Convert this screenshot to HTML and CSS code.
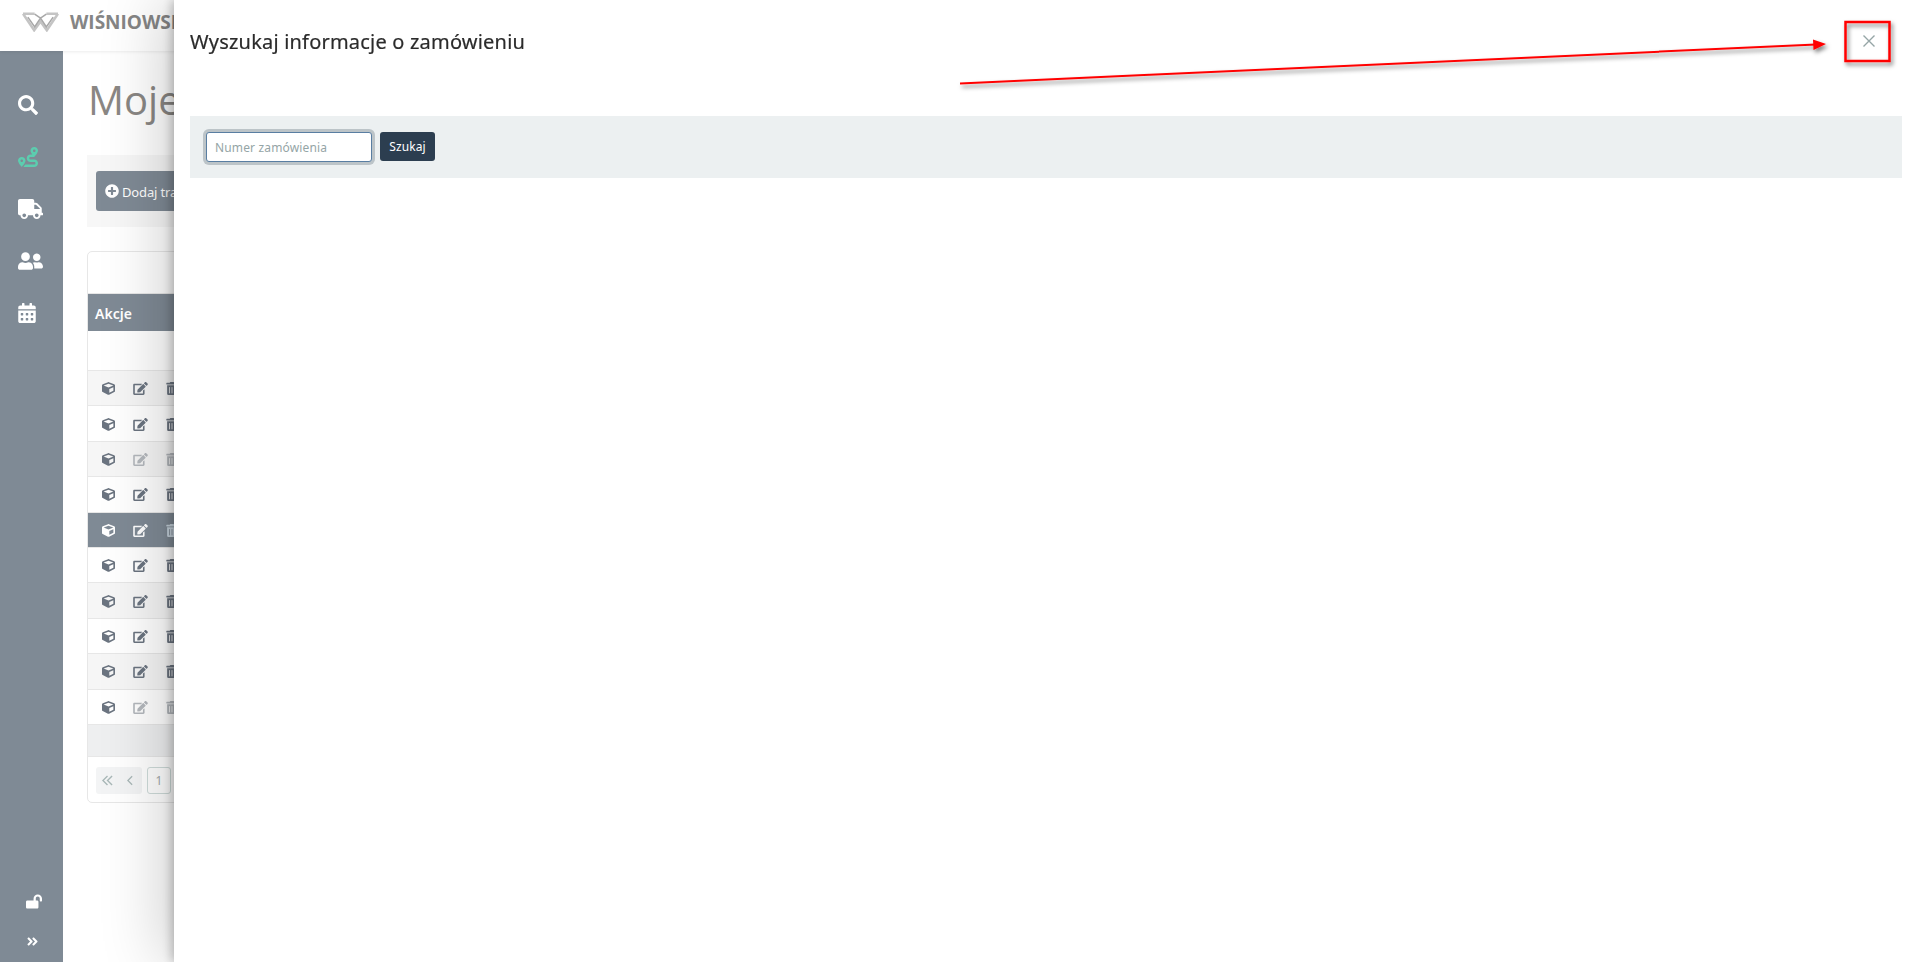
FILE: index.html
```html
<!DOCTYPE html>
<html lang="pl">
<head>
<meta charset="utf-8">
<title>Moje trasy</title>
<link rel="stylesheet" href="styles.css">
</head>
<body>
<svg class="defs" width="0" height="0" aria-hidden="true">
  <symbol id="i-search" viewBox="0 0 512 512"><path d="M505 442.7L405.3 343c-4.5-4.5-10.6-7-17-7H372c27.6-35.3 44-79.7 44-128C416 93.1 322.9 0 208 0S0 93.1 0 208s93.1 208 208 208c48.3 0 92.7-16.4 128-44v16.3c0 6.4 2.5 12.5 7 17l99.7 99.7c9.4 9.4 24.6 9.4 33.9 0l28.3-28.3c9.4-9.4 9.4-24.6.1-34zM208 336c-70.7 0-128-57.2-128-128 0-70.7 57.2-128 128-128 70.7 0 128 57.2 128 128 0 70.7-57.2 128-128 128z"/></symbol>
  <symbol id="i-route" viewBox="0 0 512 512"><path d="M416 320h-96c-17.6 0-32-14.4-32-32s14.4-32 32-32h96s96-107 96-160-43-96-96-96-96 43-96 96c0 25.5 22.2 63.4 45.3 96H320c-52.9 0-96 43.1-96 96s43.1 96 96 96h96c17.6 0 32 14.4 32 32s-14.4 32-32 32H185.5c-16 24.8-33.8 47.7-47.3 64H416c52.9 0 96-43.1 96-96s-43.1-96-96-96zm0-256c17.7 0 32 14.3 32 32s-14.3 32-32 32-32-14.3-32-32 14.3-32 32-32zM96 256c-53 0-96 43-96 96s96 160 96 160 96-107 96-160-43-96-96-96zm0 128c-17.7 0-32-14.3-32-32s14.3-32 32-32 32 14.3 32 32-14.3 32-32 32z"/></symbol>
  <symbol id="i-truck" viewBox="0 0 640 512"><path d="M624 352h-16V243.9c0-12.7-5.1-24.9-14.1-33.9L494 110.1c-9-9-21.2-14.1-33.9-14.1H416V48c0-26.5-21.5-48-48-48H48C21.5 0 0 21.5 0 48v320c0 26.5 21.5 48 48 48h16c0 53 43 96 96 96s96-43 96-96h128c0 53 43 96 96 96s96-43 96-96h48c8.8 0 16-7.2 16-16v-32c0-8.8-7.2-16-16-16zM160 464c-26.5 0-48-21.5-48-48s21.5-48 48-48 48 21.5 48 48-21.5 48-48 48zm320 0c-26.5 0-48-21.5-48-48s21.5-48 48-48 48 21.5 48 48-21.5 48-48 48zm80-208H416V144h44.1l99.9 99.9V256z"/></symbol>
  <symbol id="i-users" viewBox="0 0 640 512"><path d="M192 256c61.9 0 112-50.1 112-112S253.9 32 192 32 80 82.1 80 144s50.1 112 112 112zm76.8 32h-8.3c-20.8 10-43.9 16-68.5 16s-47.6-6-68.5-16h-8.3C51.6 288 0 339.6 0 403.2V432c0 26.5 21.5 48 48 48h288c26.5 0 48-21.5 48-48v-28.8c0-63.6-51.6-115.2-115.2-115.2zM480 256c53 0 96-43 96-96s-43-96-96-96-96 43-96 96 43 96 96 96zm48 32h-3.8c-13.9 4.8-28.6 8-44.2 8s-30.3-3.2-44.2-8H432c-20.4 0-39.2 5.9-55.7 15.4 24.4 26.3 39.7 61.2 39.7 99.8v38.4c0 2.2-.5 4.3-.6 6.4H592c26.5 0 48-21.5 48-48 0-61.9-50.1-112-112-112z"/></symbol>
  <symbol id="i-calendar" viewBox="0 0 448 512"><path d="M0 464c0 26.5 21.5 48 48 48h352c26.5 0 48-21.5 48-48V192H0v272zm320-196c0-6.6 5.4-12 12-12h40c6.6 0 12 5.4 12 12v40c0 6.6-5.4 12-12 12h-40c-6.6 0-12-5.4-12-12v-40zm0 128c0-6.6 5.4-12 12-12h40c6.6 0 12 5.4 12 12v40c0 6.6-5.4 12-12 12h-40c-6.6 0-12-5.4-12-12v-40zM192 268c0-6.6 5.4-12 12-12h40c6.6 0 12 5.4 12 12v40c0 6.6-5.4 12-12 12h-40c-6.6 0-12-5.4-12-12v-40zm0 128c0-6.6 5.4-12 12-12h40c6.6 0 12 5.4 12 12v40c0 6.6-5.4 12-12 12h-40c-6.6 0-12-5.4-12-12v-40zM64 268c0-6.6 5.4-12 12-12h40c6.6 0 12 5.4 12 12v40c0 6.6-5.4 12-12 12H76c-6.6 0-12-5.4-12-12v-40zm0 128c0-6.6 5.4-12 12-12h40c6.6 0 12 5.4 12 12v40c0 6.6-5.4 12-12 12H76c-6.6 0-12-5.4-12-12v-40zM400 64h-48V16c0-8.8-7.2-16-16-16h-32c-8.8 0-16 7.2-16 16v48H160V16c0-8.8-7.2-16-16-16h-32c-8.8 0-16 7.2-16 16v48H48C21.5 64 0 85.5 0 112v48h448v-48c0-26.5-21.5-48-48-48z"/></symbol>
  <symbol id="i-lock" viewBox="0 0 576 512"><path d="M423.5 0C339.5.3 272 69.5 272 153.5V224H48c-26.5 0-48 21.5-48 48v192c0 26.5 21.5 48 48 48h352c26.5 0 48-21.5 48-48V272c0-26.5-21.5-48-48-48h-48v-71.1c0-39.6 31.7-72.5 71.3-72.9 40-.4 72.7 32.1 72.7 72v80c0 13.3 10.7 24 24 24h32c13.3 0 24-10.7 24-24v-80C576 68 507.5-.3 423.5 0z"/></symbol>
  <symbol id="i-dbl" viewBox="0 0 448 512"><path d="M224.3 273l-136 136c-9.4 9.4-24.6 9.4-33.9 0l-22.6-22.6c-9.4-9.4-9.4-24.6 0-33.9l96.4-96.4-96.4-96.4c-9.4-9.4-9.4-24.6 0-33.9L54.3 103c9.4-9.4 24.6-9.4 33.9 0l136 136c9.5 9.4 9.5 24.6.1 34zm192-34l-136-136c-9.4-9.4-24.6-9.4-33.9 0l-22.6 22.6c-9.4 9.4-9.4 24.6 0 33.9l96.4 96.4-96.4 96.4c-9.4 9.4-9.4 24.6 0 33.9l22.6 22.6c9.4 9.4 24.6 9.4 33.9 0l136-136c9.4-9.2 9.4-24.4 0-33.8z"/></symbol>
  <symbol id="i-plus" viewBox="0 0 512 512"><path d="M256 8C119 8 8 119 8 256s111 248 248 248 248-111 248-248S393 8 256 8zm144 276c0 6.6-5.4 12-12 12h-92v92c0 6.6-5.4 12-12 12h-56c-6.6 0-12-5.4-12-12v-92h-92c-6.6 0-12-5.4-12-12v-56c0-6.6 5.4-12 12-12h92v-92c0-6.6 5.4-12 12-12h56c6.6 0 12 5.4 12 12v92h92c6.6 0 12 5.4 12 12v56z"/></symbol>
  <symbol id="i-cube" viewBox="0 0 512 512"><path d="M239.1 6.3l-208 78c-18.7 7-31.1 25-31.1 45v225.1c0 18.2 10.3 34.8 26.5 42.9l208 104c13.5 6.8 29.4 6.8 42.9 0l208-104c16.3-8.1 26.5-24.8 26.5-42.9V129.3c0-20-12.4-37.9-31.1-44.9l-208-78C262 2.2 250 2.2 239.1 6.3zM256 68.4l192 72v1.1l-192 78-192-78v-1.1l192-72zm32 356V275.5l160-65v133.9l-160 80z"/></symbol>
  <symbol id="i-edit" viewBox="0 0 576 512"><path d="M402.6 83.2l90.2 90.2c3.8 3.8 3.8 10 0 13.8L274.4 405.6l-92.8 10.3c-12.4 1.4-22.9-9.1-21.5-21.5l10.3-92.8L388.8 83.2c3.8-3.8 10-3.8 13.8 0zm162-22.9l-48.8-48.8c-15.2-15.2-39.9-15.2-55.2 0l-35.4 35.4c-3.8 3.8-3.8 10 0 13.8l90.2 90.2c3.8 3.8 10 3.8 13.8 0l35.4-35.4c15.2-15.3 15.2-40 0-55.2zM384 346.2V448H64V128h229.8c3.2 0 6.2-1.3 8.5-3.5l40-40c7.6-7.6 2.2-20.5-8.5-20.5H48C21.5 64 0 85.5 0 112v352c0 26.5 21.5 48 48 48h352c26.5 0 48-21.5 48-48V306.2c0-10.7-12.9-16-20.5-8.5l-40 40c-2.2 2.3-3.5 5.3-3.5 8.5z"/></symbol>
  <symbol id="i-trash" viewBox="0 0 448 512"><path d="M32 464a48 48 0 0 0 48 48h288a48 48 0 0 0 48-48V128H32zm272-256a16 16 0 0 1 32 0v224a16 16 0 0 1-32 0zm-96 0a16 16 0 0 1 32 0v224a16 16 0 0 1-32 0zm-96 0a16 16 0 0 1 32 0v224a16 16 0 0 1-32 0zM432 32H312l-9.4-18.7A24 24 0 0 0 281.1 0H166.8a23.72 23.72 0 0 0-21.4 13.3L136 32H16A16 16 0 0 0 0 48v32a16 16 0 0 0 16 16h416a16 16 0 0 0 16-16V48a16 16 0 0 0-16-16z"/></symbol>
</svg>

<div class="app">
  <header class="topbar">
    <svg class="logo" viewBox="0 0 38 20" aria-hidden="true">
      <path class="logo-a" d="M1 1.500h12M25 1.500h12M1 1.500l11.500 17 6.500-9 6.500 9 11.500-17"/>
      <path class="logo-b" d="M6 5l7 10 6-9 6 9 7-10M13 2l6 4 6-4"/>
    </svg>
    <span class="brand">WIŚNIOWSKI</span>
  </header>

  <nav class="sidebar">
    <div class="nav-main">
      <svg class="nav-icon nav-search"><use href="#i-search"/></svg>
      <svg class="nav-icon nav-route"><use href="#i-route"/></svg>
      <svg class="nav-icon nav-wide"><use href="#i-truck"/></svg>
      <svg class="nav-icon nav-wide"><use href="#i-users"/></svg>
      <svg class="nav-icon nav-cal"><use href="#i-calendar"/></svg>
    </div>
    <div class="nav-foot">
      <svg class="foot-lock"><use href="#i-lock"/></svg>
      <svg class="foot-dbl"><use href="#i-dbl"/></svg>
    </div>
  </nav>

  <main class="content">
    <h1 class="page-title">Moje trasy</h1>
    <div class="toolbar">
      <button class="btn-add" type="button"><svg class="btn-icon"><use href="#i-plus"/></svg>Dodaj trasę</button>
    </div>
    <section class="card">
      <div class="card-top"></div>
      <div class="thead">Akcje</div>
      <div class="tfilter"></div>
      <div class="row odd"><svg class="a-cube"><use href="#i-cube"/></svg><svg class="a-edit"><use href="#i-edit"/></svg><svg class="a-trash"><use href="#i-trash"/></svg></div>
      <div class="row"><svg class="a-cube"><use href="#i-cube"/></svg><svg class="a-edit"><use href="#i-edit"/></svg><svg class="a-trash"><use href="#i-trash"/></svg></div>
      <div class="row odd off"><svg class="a-cube"><use href="#i-cube"/></svg><svg class="a-edit"><use href="#i-edit"/></svg><svg class="a-trash"><use href="#i-trash"/></svg></div>
      <div class="row"><svg class="a-cube"><use href="#i-cube"/></svg><svg class="a-edit"><use href="#i-edit"/></svg><svg class="a-trash"><use href="#i-trash"/></svg></div>
      <div class="row selected"><svg class="a-cube"><use href="#i-cube"/></svg><svg class="a-edit"><use href="#i-edit"/></svg><svg class="a-trash"><use href="#i-trash"/></svg></div>
      <div class="row"><svg class="a-cube"><use href="#i-cube"/></svg><svg class="a-edit"><use href="#i-edit"/></svg><svg class="a-trash"><use href="#i-trash"/></svg></div>
      <div class="row odd"><svg class="a-cube"><use href="#i-cube"/></svg><svg class="a-edit"><use href="#i-edit"/></svg><svg class="a-trash"><use href="#i-trash"/></svg></div>
      <div class="row"><svg class="a-cube"><use href="#i-cube"/></svg><svg class="a-edit"><use href="#i-edit"/></svg><svg class="a-trash"><use href="#i-trash"/></svg></div>
      <div class="row odd"><svg class="a-cube"><use href="#i-cube"/></svg><svg class="a-edit"><use href="#i-edit"/></svg><svg class="a-trash"><use href="#i-trash"/></svg></div>
      <div class="row off"><svg class="a-cube"><use href="#i-cube"/></svg><svg class="a-edit"><use href="#i-edit"/></svg><svg class="a-trash"><use href="#i-trash"/></svg></div>
      <div class="tfoot"></div>
      <div class="pager">
        <div class="pager-nav">
          <svg class="pg-dbl" viewBox="0 0 12 12"><path d="M6 1L1 6l5 5M11 1L6 6l5 5"/></svg>
          <svg class="pg-one" viewBox="0 0 7 12"><path d="M6 1L1 6l5 5"/></svg>
        </div>
        <div class="pg-num">1</div>
      </div>
    </section>
  </main>
</div>

<aside class="panel">
  <header class="panel-head">
    <h2 class="panel-title">Wyszukaj informacje o zamówieniu</h2>
    <svg class="close" viewBox="0 0 12 12" aria-label="Zamknij"><path d="M.5.5l11 11M11.5.5l-11 11"/></svg>
  </header>
  <form class="search">
    <input class="search-input" type="text" placeholder="Numer zamówienia">
    <button class="search-btn" type="button">Szukaj</button>
  </form>
</aside>

<svg class="annot" viewBox="0 0 1917 962" aria-hidden="true">
  <defs>
    <filter id="soft" x="-5%" y="-50%" width="110%" height="250%">
      <feDropShadow dx="2" dy="3" stdDeviation="2" flood-color="#000" flood-opacity=".5"/>
    </filter>
  </defs>
  <g filter="url(#soft)">
    <path class="annot-line" d="M960 83.500L1816 44.500"/>
    <path class="annot-head" d="M1813 39.500l13 4.500-12.500 6z"/>
    <rect class="annot-box" x="1845.500" y="22" width="44" height="39"/>
  </g>
</svg>
</body>
</html>
```
FILE: styles.css
```css
* { box-sizing: border-box; }
html, body { margin: 0; height: 100%; overflow: hidden; background: #fff; }
body { font-family: "Noto Sans", "Open Sans", sans-serif; color: #212529; }
.defs { position: absolute; }

.app {
  display: grid;
  grid-template-columns: 63px 1fr;
  grid-template-rows: 51px 911px;
  height: 962px;
}

.topbar {
  grid-column: 1 / 3;
  display: flex;
  align-items: center;
  padding-left: 22px;
  background: #fff;
  box-shadow: 0 1px 3px rgba(0,0,0,.08);
  position: relative;
}
.logo { width: 37px; height: 20px; margin-top: -7px; fill: none; }
.logo-a { stroke: #c4c4c4; stroke-width: 2.600px; }
.logo-b { stroke: #a8a8a8; stroke-width: 1.600px; }
.brand {
  margin-left: 11px;
  margin-top: -7px;
  font-family: "Open Sans", sans-serif;
  font-weight: 700;
  font-size: 19px;
  color: #858585;
  white-space: nowrap;
}

.sidebar {
  display: flex;
  flex-direction: column;
  justify-content: space-between;
  background: #7f8a95;
  fill: #fff;
}
.nav-main {
  display: flex;
  flex-direction: column;
  align-items: flex-start;
  gap: 32px;
  padding: 44px 0 0 17.500px;
}
.nav-icon { height: 20px; display: block; }
.nav-search { width: 20px; }
.nav-route { width: 20px; fill: #5ccdaf; }
.nav-wide { width: 25px; }
.nav-cal { width: 18px; }
.nav-foot {
  display: flex;
  flex-direction: column;
  gap: 26px;
  padding: 0 0 14px 26px;
}
.foot-lock { width: 16px; height: 15px; display: block; }
.foot-dbl { width: 13px; height: 13px; display: block; }

.content { padding: 0 0 0 24px; min-width: 0; }
.page-title {
  margin: 0;
  height: 104px;
  padding-top: 25px;
  padding-left: 1px;
  font-size: 40px;
  line-height: 48px;
  font-weight: 400;
  font-family: "Open Sans", sans-serif;
  color: #8a8784;
}
.toolbar {
  height: 72px;
  padding: 16px 9px;
  background: #f7f7f7;
}
.btn-add {
  display: flex;
  align-items: center;
  height: 40px;
  width: 130px;
  padding: 2px 9px 0;
  border: 0;
  border-radius: 3px;
  background: #7f8a95;
  color: #fff;
  font: 13px "Noto Sans", sans-serif;
  letter-spacing: -.15px;
  white-space: nowrap;
}
.btn-icon { width: 14px; height: 14px; margin: -2px 3px 0 0; fill: #fff; flex: none; }

.card {
  margin-top: 24px;
  height: 552px;
  border: 1px solid #e7e7e7;
  border-radius: 5px;
  overflow: hidden;
}
.card-top { height: 42px; border-bottom: 1px solid #e7e7e7; }
.thead {
  height: 37px;
  padding: 1px 7px 0;
  background: #7f8a95;
  color: #fff;
  font-weight: 600;
  font-size: 14px;
  line-height: 37px;
}
.tfilter { height: 40px; border-bottom: 1px solid #e7e7e7; }
.row {
  display: flex;
  align-items: center;
  height: 35.400px;
  padding: 1px 0 0 14px;
  border-bottom: 1px solid #e7e7e7;
  fill: #6b7480;
}
.row.odd { background: #f6f6f6; }
.row.selected { background: #7f8a95; fill: #fff; }
.a-cube { width: 13px; height: 13px; flex: none; }
.a-edit { width: 15px; height: 13px; margin-left: 18px; flex: none; }
.a-trash { width: 12px; height: 13px; margin-left: 18px; flex: none; }
.row.off .a-edit, .row.off .a-trash { fill: #b4b8bd; }
.row.selected .a-trash { fill: #c9d6e0; }
.tfoot { height: 32px; background: #eeeff0; border-bottom: 1px solid #e7e7e7; }
.pager {
  display: flex;
  align-items: flex-start;
  gap: 5px;
  padding: 10px 8px;
}
.pager-nav {
  display: flex;
  align-items: center;
  gap: 14px;
  width: 46px;
  height: 27px;
  padding-left: 6px;
  background: #f3f4f5;
  border-radius: 3px;
}
.pg-dbl, .pg-one { height: 11px; fill: none; stroke: #a9b8b8; stroke-width: 1.500px; }
.pg-dbl { width: 11px; }
.pg-one { width: 6px; }
.pg-num {
  width: 24px;
  height: 27px;
  border: 1px solid #cfdcda;
  border-radius: 3px;
  color: #a2aaaa;
  font-size: 12px;
  line-height: 25px;
  text-align: center;
}

.panel {
  position: fixed;
  top: 0;
  right: 0;
  bottom: 0;
  left: 174px;
  padding: 0 15px 0 16px;
  background: #fff;
  box-shadow: -2px 0 10px rgba(0,0,0,.26), -10px 0 60px rgba(0,0,0,.2);
}
.panel-head {
  position: relative;
  display: flex;
  align-items: flex-start;
  justify-content: space-between;
  height: 116px;
  padding-top: 27px;
}
.panel-title {
  margin: 0;
  font-size: 20px;
  line-height: 30px;
  font-weight: 400;
  letter-spacing: .2px;
  color: #2b2b2b;
  -webkit-text-stroke: .2px #2b2b2b;
}
.close {
  width: 12px;
  height: 12px;
  margin: 8px 27px 0 0;
  fill: none;
  stroke: #95a5a6;
  stroke-width: 1.400px;
}
.search {
  display: flex;
  align-items: flex-start;
  gap: 8px;
  height: 62px;
  padding: 16px;
  background: #ecf0f1;
}
.search-input {
  width: 166px;
  height: 30px;
  padding: 0 8px;
  border: 1px solid #597ea2;
  border-radius: 3px;
  background: #fff;
  box-shadow: 0 0 0 3px rgba(44,62,80,.25);
  outline: 0;
  font: 12px "Noto Sans", sans-serif;
  letter-spacing: .15px;
}
.search-input::placeholder { color: #95a5a6; opacity: 1; }
.search-btn {
  width: 55px;
  height: 29px;
  padding: 0;
  border: 0;
  border-radius: 3px;
  background: #2c3e50;
  color: #fff;
  font: 12px "Noto Sans", sans-serif;
  letter-spacing: .1px;
}

.annot { position: fixed; inset: 0; width: 1917px; height: 962px; pointer-events: none; }
.annot-line { fill: none; stroke: #f00; stroke-width: 2px; }
.annot-head { fill: #f00; }
.annot-box { fill: none; stroke: #f00; stroke-width: 2.500px; }
```
